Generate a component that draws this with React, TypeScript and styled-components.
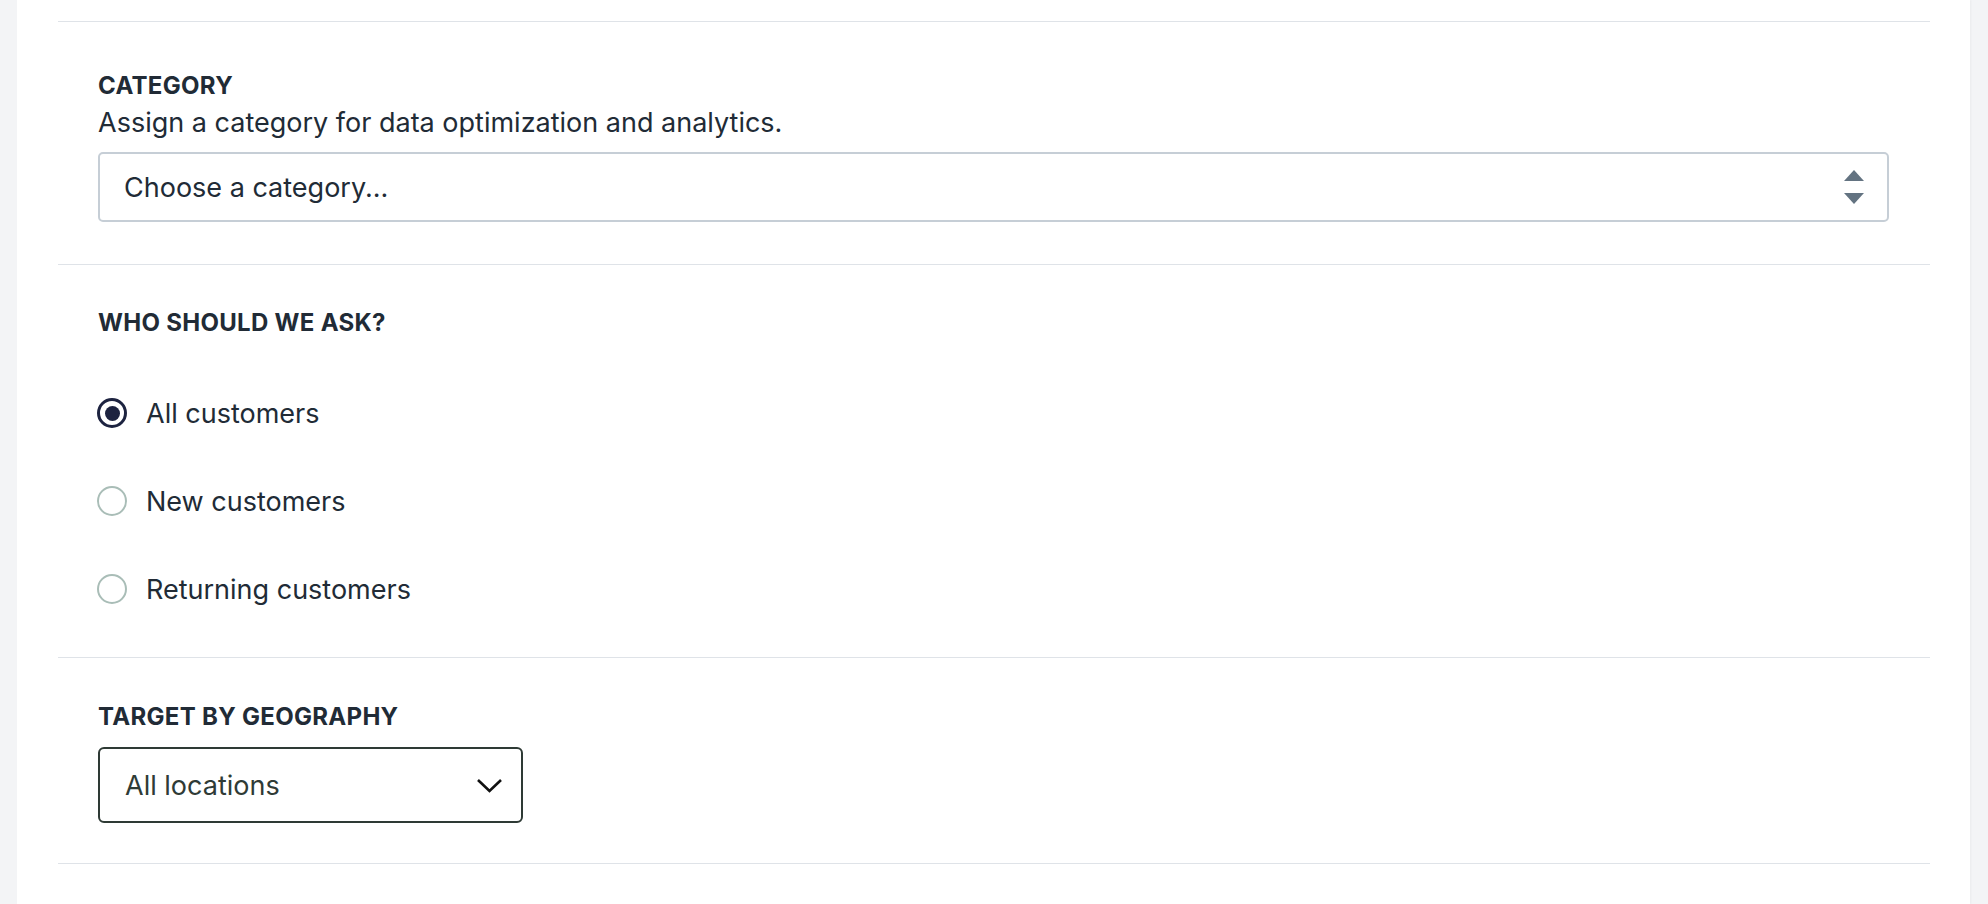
import React, { useState } from 'react';
import styled, { createGlobalStyle } from 'styled-components';

const GlobalStyle = createGlobalStyle`
    body {
        margin: 0;
        background: #f3f4f6;
        font-family: Inter, 'Noto Sans', sans-serif;
        color: #212b36;
    }
`;

const Page = styled.div`
    display: flex;
    min-height: 904px;
    padding: 0 18px 0 17px;
`;

const Panel = styled.div`
    flex: 1;
    background: #ffffff;
    padding: 21px 40px 0 41px;
    box-shadow: 1px 0 2px rgba(0, 0, 0, 0.04);
`;

const Section = styled.section<{ $top: number; $bottom: number }>`
    border-top: 1px solid #dfe3e8;
    padding: ${(p) => p.$top}px 41px ${(p) => p.$bottom}px 40px;

    &:last-child {
        border-bottom: 1px solid #dfe3e8;
    }
`;

const Label = styled.div`
    font-size: 24px;
    line-height: 30px;
    margin-bottom: -2px;
    font-weight: 700;
    letter-spacing: 0.3px;
    text-transform: uppercase;
`;

const Help = styled.p`
    margin: 8px 0 0;
    font-size: 27px;
    line-height: 32px;
`;

const NativeSelect = styled.div`
    margin-top: 13px;
    height: 70px;
    box-sizing: border-box;
    border: 2px solid #c6ced6;
    border-radius: 5px;
    display: flex;
    align-items: center;
    justify-content: space-between;
    padding: 0 23px 0 24px;
    font-size: 27px;
`;

const Stepper = styled.div`
    display: flex;
    flex-direction: column;
    gap: 12px;
`;

const RadioList = styled.div`
    margin-top: 61px;
    display: flex;
    flex-direction: column;
    gap: 56px;
`;

const RadioRow = styled.label`
    display: flex;
    align-items: center;
    height: 32px;
    gap: 19px;
    margin-left: -1px;
    font-size: 27px;
    cursor: pointer;
`;

const RadioDot = styled.span<{ $checked: boolean }>`
    width: 30px;
    height: 30px;
    box-sizing: border-box;
    border-radius: 50%;
    border: ${(p) => (p.$checked ? '3px solid #1d2340' : '2px solid #a9bdb7')};
    display: flex;
    align-items: center;
    justify-content: center;

    &::after {
        content: '';
        width: 15px;
        height: 15px;
        border-radius: 50%;
        background: ${(p) => (p.$checked ? '#1d2340' : 'transparent')};
    }
`;

const Dropdown = styled.div`
    margin-top: 17px;
    width: 425px;
    height: 76px;
    box-sizing: border-box;
    border: 2px solid #2e3a35;
    border-radius: 6px;
    display: flex;
    align-items: center;
    justify-content: space-between;
    padding: 0 18px 0 25px;
    font-size: 27px;
    color: #2f3b36;
`;

const audiences = ['All customers', 'New customers', 'Returning customers'];

const App = () => {
    const [audience, setAudience] = useState(0);

    return (
        <>
            <GlobalStyle />
            <Page>
                <Panel>
                    <Section $top={49} $bottom={42}>
                        <Label>Category</Label>
                        <Help>Assign a category for data optimization and analytics.</Help>
                        <NativeSelect>
                            <span>Choose a category...</span>
                            <Stepper>
                                <svg width='20' height='11' viewBox='0 0 20 11'>
                                    <path d='M10 0 L20 11 L0 11 Z' fill='#637381' />
                                </svg>
                                <svg width='20' height='11' viewBox='0 0 20 11'>
                                    <path d='M0 0 L20 0 L10 11 Z' fill='#637381' />
                                </svg>
                            </Stepper>
                        </NativeSelect>
                    </Section>
                    <Section $top={43} $bottom={52}>
                        <Label>Who should we ask?</Label>
                        <RadioList>
                            {audiences.map((a, i) => (
                                <RadioRow key={a} onClick={() => setAudience(i)}>
                                    <RadioDot $checked={audience === i} />
                                    {a}
                                </RadioRow>
                            ))}
                        </RadioList>
                    </Section>
                    <Section $top={44} $bottom={40}>
                        <Label>Target by geography</Label>
                        <Dropdown>
                            <span>All locations</span>
                            <svg width='27' height='17' viewBox='0 0 27 17'>
                                <polyline
                                    points='2,3 13.5,14 25,3'
                                    fill='none'
                                    stroke='#111'
                                    strokeWidth='2.6'
                                />
                            </svg>
                        </Dropdown>
                    </Section>
                </Panel>
            </Page>
        </>
    );
};

export default App;
